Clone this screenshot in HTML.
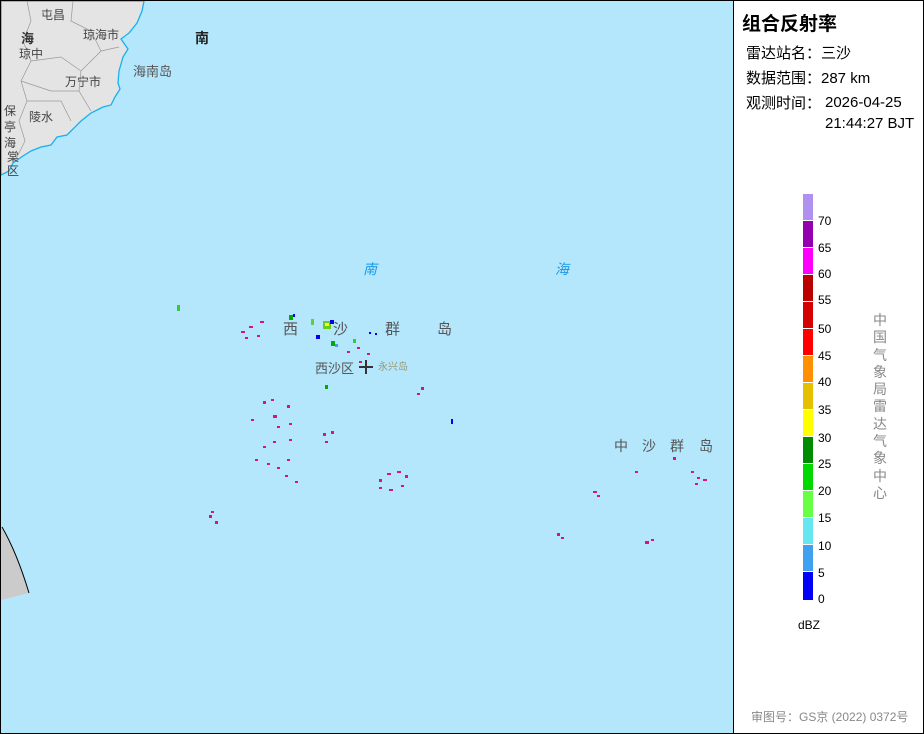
<!DOCTYPE html>
<html><head><meta charset="utf-8"><style>
body{margin:0;width:924px;height:734px;overflow:hidden;background:#fff;font-family:"Liberation Sans","Noto Sans CJK SC",sans-serif;position:relative}
#frame{position:absolute;left:0;top:0;width:922px;height:732px;border:1px solid #000}
#map{position:absolute;left:1px;top:1px;width:732px;height:732px;background:#b4e6fc;border-right:1px solid #000}
.t{position:absolute;color:#000;white-space:nowrap}
.cb{position:absolute;left:803px;width:10px;height:26px}
.lb{position:absolute;left:818px;font-size:12px;color:#000}
</style></head><body>
<div id="frame"></div>
<div id="map">
<svg width="732" height="732" style="position:absolute;left:0;top:0" font-family="Liberation Sans,Noto Sans CJK SC,sans-serif">
<path d="M0 0 L143 0 L141 10 L136 22 L128 32 L120 38 L127 48 L122 56 L118 70 L117 82 L119 88 L114 96 L110 104 L102 106 L90 112 L80 120 L72 128 L66 134 L56 136 L50 144 L40 146 L30 150 L22 155 L12 162 L8 170 L0 174 Z" fill="#e4e4e4" stroke="#1ab0f0" stroke-width="1.3"/>
<g stroke="#999" stroke-width="0.7" fill="none">
<path d="M26 0 L30 20 L22 40 L30 60 L20 80 L26 100 L18 120 L24 140 L14 160"/>
<path d="M72 0 L70 20 L90 30 L100 50 L80 70 L78 90 L90 110"/>
<path d="M30 60 L60 56 L80 70"/><path d="M20 80 L50 90 L78 90"/><path d="M100 50 L118 46"/>
<path d="M26 100 L60 100 L70 120"/>
</g>
<path d="M0 526 Q16 552 28 592 L0 599 Z" fill="#cbcbcb"/>
<path d="M1 526 Q16 552 28 592" fill="none" stroke="#000" stroke-width="1"/>
<g fill="#444" font-size="12">
<text x="40" y="18">屯昌</text><text x="82" y="38">琼海市</text><text x="18" y="57">琼中</text>
<text x="64" y="85">万宁市</text><text x="28" y="120">陵水</text>
<text x="3" y="114">保</text><text x="3" y="130">亭</text><text x="3" y="146">海</text><text x="6" y="160">棠</text><text x="6" y="174">区</text>
</g>
<text x="20" y="42" font-size="13" font-weight="bold" fill="#333">海</text>
<text x="194" y="42" font-size="14" font-weight="bold" fill="#222">南</text>
<text x="132" y="75" font-size="13" fill="#555">海南岛</text>
<text x="362" y="273" font-size="14" font-style="italic" fill="#1a9ae6">南</text>
<text x="554" y="273" font-size="14" font-style="italic" fill="#1a9ae6">海</text>
<g fill="#555" font-size="15"><text x="282" y="333">西</text><text x="332" y="333">沙</text><text x="384" y="333">群</text><text x="436" y="333">岛</text></g>
<text x="314" y="372" font-size="13" fill="#555">西沙区</text>
<text x="377" y="369" font-size="10" fill="#997">永兴岛</text>
<path d="M358 366 h14 M365 359 v14" stroke="#333" stroke-width="2"/>
<g fill="#555" font-size="14"><text x="613" y="450">中</text><text x="641" y="450">沙</text><text x="669" y="450">群</text><text x="698" y="450">岛</text></g>
<g fill="#e0107f">
<rect x="240" y="330" width="4" height="2"/><rect x="248" y="325" width="4" height="2"/><rect x="256" y="334" width="3" height="2"/><rect x="259" y="320" width="4" height="2"/><rect x="244" y="336" width="3" height="2"/>
<rect x="262" y="400" width="3" height="3"/><rect x="270" y="398" width="3" height="2"/><rect x="286" y="404" width="3" height="3"/><rect x="250" y="418" width="3" height="2"/><rect x="272" y="414" width="4" height="3"/><rect x="288" y="422" width="3" height="2"/><rect x="276" y="425" width="3" height="2"/>
<rect x="262" y="445" width="3" height="2"/><rect x="272" y="440" width="3" height="2"/><rect x="288" y="438" width="3" height="2"/><rect x="254" y="458" width="3" height="2"/><rect x="266" y="462" width="3" height="2"/><rect x="286" y="458" width="3" height="2"/><rect x="276" y="466" width="3" height="2"/><rect x="284" y="474" width="3" height="2"/><rect x="294" y="480" width="3" height="2"/>
<rect x="322" y="432" width="3" height="3"/><rect x="330" y="430" width="3" height="3"/><rect x="324" y="440" width="3" height="2"/>
<rect x="378" y="478" width="3" height="3"/><rect x="386" y="472" width="4" height="2"/><rect x="396" y="470" width="4" height="2"/><rect x="404" y="474" width="3" height="3"/><rect x="378" y="486" width="3" height="2"/><rect x="388" y="488" width="4" height="2"/><rect x="400" y="484" width="3" height="2"/>
<rect x="208" y="514" width="3" height="3"/><rect x="214" y="520" width="3" height="3"/><rect x="210" y="510" width="3" height="2"/>
<rect x="420" y="386" width="3" height="3"/><rect x="416" y="392" width="3" height="2"/>
<rect x="346" y="350" width="3" height="2"/><rect x="356" y="346" width="3" height="2"/><rect x="366" y="352" width="3" height="2"/><rect x="358" y="360" width="3" height="2"/>
<rect x="592" y="490" width="4" height="2"/><rect x="596" y="494" width="3" height="2"/><rect x="634" y="470" width="3" height="2"/><rect x="672" y="456" width="3" height="3"/>
<rect x="690" y="470" width="3" height="2"/><rect x="696" y="476" width="3" height="2"/><rect x="702" y="478" width="4" height="2"/><rect x="694" y="482" width="3" height="2"/>
<rect x="556" y="532" width="3" height="3"/><rect x="560" y="536" width="3" height="2"/><rect x="644" y="540" width="4" height="3"/><rect x="650" y="538" width="3" height="2"/>
</g>
<g>
<rect x="176" y="304" width="3" height="6" fill="#3c3"/>
<rect x="288" y="314" width="4" height="5" fill="#0a0"/><rect x="292" y="313" width="2" height="3" fill="#00f"/>
<rect x="310" y="318" width="3" height="6" fill="#6c3"/>
<rect x="322" y="320" width="8" height="8" fill="#6c2"/><rect x="324" y="322" width="4" height="3" fill="#ff0"/><rect x="329" y="319" width="4" height="4" fill="#00e"/>
<rect x="315" y="334" width="4" height="4" fill="#00e"/><rect x="330" y="340" width="4" height="5" fill="#0a0"/><rect x="334" y="343" width="3" height="3" fill="#49f"/>
<rect x="352" y="338" width="3" height="4" fill="#3c3"/>
<rect x="324" y="384" width="3" height="4" fill="#0a0"/><rect x="450" y="418" width="2" height="5" fill="#00e"/>
<rect x="368" y="331" width="2" height="2" fill="#00e"/><rect x="374" y="332" width="2" height="2" fill="#00e"/>
</g>
</svg>
</div>
<div class="t" style="left:742px;top:9px;font-size:19px;font-weight:bold">组合反射率</div>
<div class="t" style="left:746px;top:42px;font-size:15px">雷达站名：三沙</div>
<div class="t" style="left:746px;top:67px;font-size:15px">数据范围：287 km</div>
<div class="t" style="left:746px;top:92px;font-size:15px">观测时间：</div>
<div class="t" style="left:825px;top:92px;font-size:15px;line-height:21px">2026-04-25<br>21:44:27 BJT</div>
<div class="cb" style="top:194px;background:#b090f0"></div>
<div class="cb" style="top:221px;background:#9400b0"></div>
<div class="cb" style="top:248px;background:#ff00ff"></div>
<div class="cb" style="top:275px;background:#bb0000"></div>
<div class="cb" style="top:302px;background:#d50000"></div>
<div class="cb" style="top:329px;background:#ff0000"></div>
<div class="cb" style="top:356px;background:#ff9000"></div>
<div class="cb" style="top:383px;background:#e6c000"></div>
<div class="cb" style="top:410px;background:#ffff00"></div>
<div class="cb" style="top:437px;background:#008c00"></div>
<div class="cb" style="top:464px;background:#00d800"></div>
<div class="cb" style="top:491px;background:#66ff44"></div>
<div class="cb" style="top:518px;background:#66e6f0"></div>
<div class="cb" style="top:545px;background:#40a0f0"></div>
<div class="cb" style="top:572px;background:#0000f6;height:28px"></div>
<div class="lb" style="top:214px">70</div><div class="lb" style="top:241px">65</div><div class="lb" style="top:267px">60</div><div class="lb" style="top:293px">55</div><div class="lb" style="top:322px">50</div><div class="lb" style="top:349px">45</div><div class="lb" style="top:375px">40</div><div class="lb" style="top:403px">35</div><div class="lb" style="top:431px">30</div><div class="lb" style="top:457px">25</div><div class="lb" style="top:484px">20</div><div class="lb" style="top:511px">15</div><div class="lb" style="top:539px">10</div><div class="lb" style="top:566px">5</div><div class="lb" style="top:592px">0</div>
<div class="t" style="left:798px;top:618px;font-size:12px">dBZ</div>
<div class="t" style="left:873px;top:312px;font-size:14px;color:#888;width:14px;line-height:17.3px;white-space:normal">中国气象局雷达气象中心</div>
<div class="t" style="left:751px;top:708px;font-size:12px;color:#888">审图号：GS京 (2022) 0372号</div>
</body></html>
